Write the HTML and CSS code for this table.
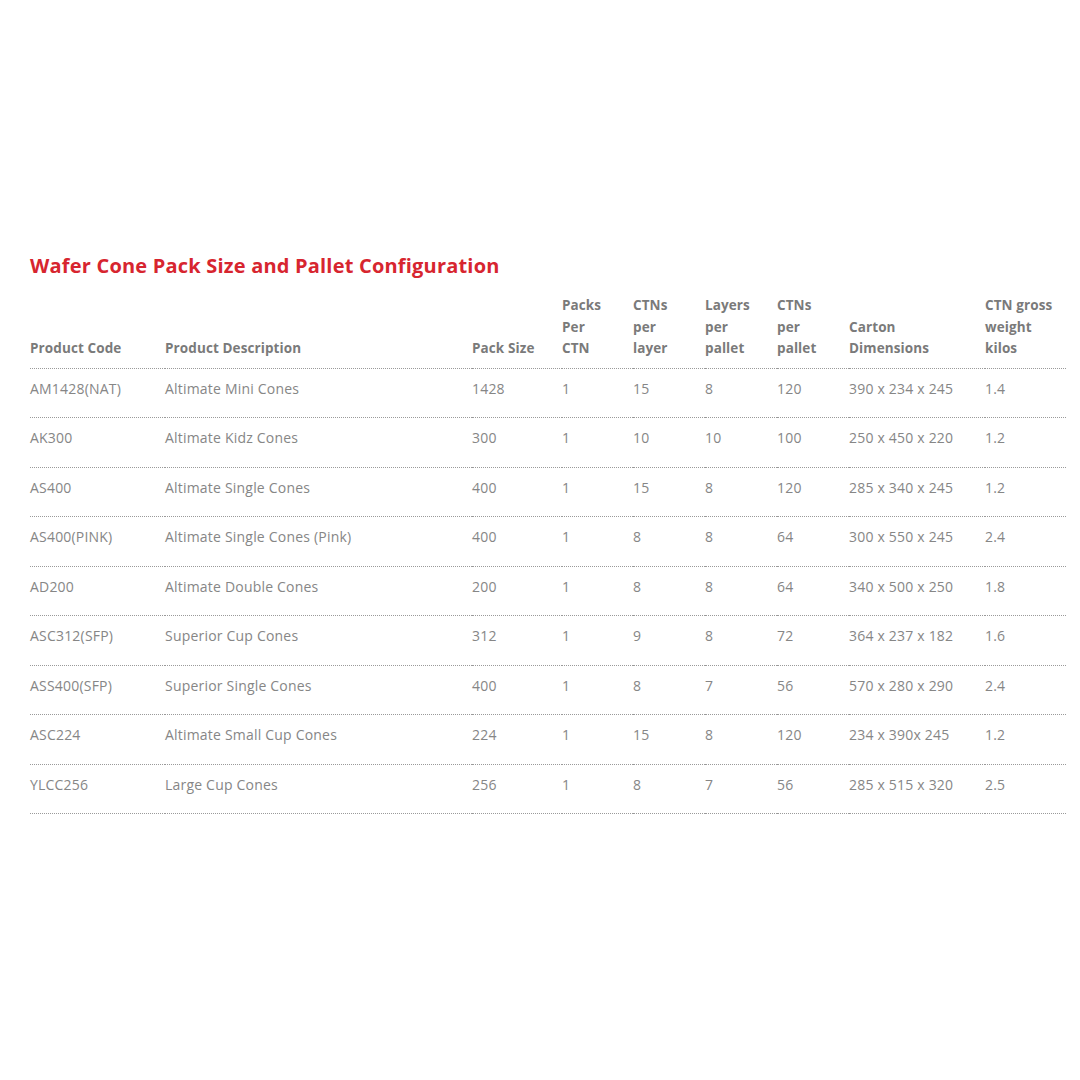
FILE: index.html
```html
<!DOCTYPE html>
<html>
<head>
<meta charset="utf-8">
<link rel="stylesheet" href="styles.css">
</head>
<body>
<div class="page">
  <h1 class="title">Wafer Cone Pack Size and Pallet Configuration</h1>
  <table class="spec">
    <colgroup>
      <col class="c1"><col class="c2"><col class="c3"><col class="c4"><col class="c5"><col class="c6"><col class="c7"><col class="c8"><col class="c9">
    </colgroup>
    <thead>
      <tr>
        <th>Product Code</th>
        <th>Product Description</th>
        <th>Pack Size</th>
        <th>Packs<br>Per<br>CTN</th>
        <th>CTNs<br>per<br>layer</th>
        <th>Layers<br>per<br>pallet</th>
        <th>CTNs<br>per<br>pallet</th>
        <th>Carton<br>Dimensions</th>
        <th>CTN gross<br>weight<br>kilos</th>
      </tr>
    </thead>
    <tbody>
      <tr><td>AM1428(NAT)</td><td>Altimate Mini Cones</td><td>1428</td><td>1</td><td>15</td><td>8</td><td>120</td><td>390 x 234 x 245</td><td>1.4</td></tr>
      <tr><td>AK300</td><td>Altimate Kidz Cones</td><td>300</td><td>1</td><td>10</td><td>10</td><td>100</td><td>250 x 450 x 220</td><td>1.2</td></tr>
      <tr><td>AS400</td><td>Altimate Single Cones</td><td>400</td><td>1</td><td>15</td><td>8</td><td>120</td><td>285 x 340 x 245</td><td>1.2</td></tr>
      <tr><td>AS400(PINK)</td><td>Altimate Single Cones (Pink)</td><td>400</td><td>1</td><td>8</td><td>8</td><td>64</td><td>300 x 550 x 245</td><td>2.4</td></tr>
      <tr><td>AD200</td><td>Altimate Double Cones</td><td>200</td><td>1</td><td>8</td><td>8</td><td>64</td><td>340 x 500 x 250</td><td>1.8</td></tr>
      <tr><td>ASC312(SFP)</td><td>Superior Cup Cones</td><td>312</td><td>1</td><td>9</td><td>8</td><td>72</td><td>364 x 237 x 182</td><td>1.6</td></tr>
      <tr><td>ASS400(SFP)</td><td>Superior Single Cones</td><td>400</td><td>1</td><td>8</td><td>7</td><td>56</td><td>570 x 280 x 290</td><td>2.4</td></tr>
      <tr><td>ASC224</td><td>Altimate Small Cup Cones</td><td>224</td><td>1</td><td>15</td><td>8</td><td>120</td><td>234 x 390x 245</td><td>1.2</td></tr>
      <tr><td>YLCC256</td><td>Large Cup Cones</td><td>256</td><td>1</td><td>8</td><td>7</td><td>56</td><td>285 x 515 x 320</td><td>2.5</td></tr>
    </tbody>
  </table>
</div>
</body>
</html>
```

FILE: styles.css
```css
html, body {
  margin: 0;
  padding: 0;
  background: #ffffff;
}
.page {
  width: 1036px;
  padding: 252px 14px 0 30px;
  font-family: "Open Sans", "Liberation Sans", sans-serif;
}
.title {
  margin: 0 0 15px 0;
  font-size: 20px;
  line-height: 28px;
  font-weight: 700;
  color: #d7252f;
  letter-spacing: 0.2px;
}
.spec {
  width: 1036px;
  border-collapse: collapse;
  table-layout: fixed;
}
.c1 { width: 135px; }
.c2 { width: 307px; }
.c3 { width: 90px; }
.c4 { width: 71px; }
.c5 { width: 72px; }
.c6 { width: 72px; }
.c7 { width: 72px; }
.c8 { width: 136px; }
.c9 { width: 81px; }
.spec th {
  text-align: left;
  vertical-align: bottom;
  font-size: 13.5px;
  line-height: 21.5px;
  font-weight: 700;
  color: #7a7a7a;
  padding: 0 0 8px 0;
  border-bottom: 1px dotted #9a9a9a;
  white-space: nowrap;
  letter-spacing: 0.1px;
}
.spec td {
  text-align: left;
  font-size: 14px;
  line-height: 20px;
  color: #868686;
  padding: 10px 0 18.5px 0;
  border-bottom: 1px dotted #9a9a9a;
  white-space: nowrap;
  letter-spacing: 0.2px;
}
```
